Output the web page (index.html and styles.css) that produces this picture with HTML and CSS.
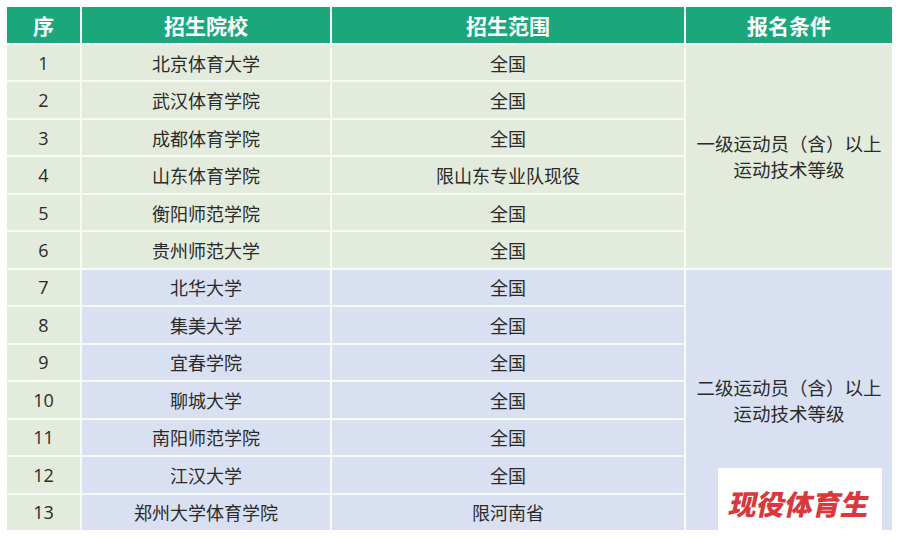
FILE: index.html
```html
<!DOCTYPE html>
<html lang="zh-CN">
<head>
<meta charset="utf-8">
<title>招生院校</title>
<link rel="stylesheet" href="styles.css">
</head>
<body>
<div class="page">
  <div class="table">
    <div class="th">序</div>
    <div class="th">招生院校</div>
    <div class="th">招生范围</div>
    <div class="th">报名条件</div>

    <div class="td seq r1">1</div><div class="td g r1 c2">北京体育大学</div><div class="td g r1 c3">全国</div>
    <div class="td seq r2">2</div><div class="td g r2 c2">武汉体育学院</div><div class="td g r2 c3">全国</div>
    <div class="td seq r3">3</div><div class="td g r3 c2">成都体育学院</div><div class="td g r3 c3">全国</div>
    <div class="td seq r4">4</div><div class="td g r4 c2">山东体育学院</div><div class="td g r4 c3">限山东专业队现役</div>
    <div class="td seq r5">5</div><div class="td g r5 c2">衡阳师范学院</div><div class="td g r5 c3">全国</div>
    <div class="td seq r6">6</div><div class="td g r6 c2">贵州师范大学</div><div class="td g r6 c3">全国</div>
    <div class="td seq r7">7</div><div class="td b r7 c2">北华大学</div><div class="td b r7 c3">全国</div>
    <div class="td seq r8">8</div><div class="td b r8 c2">集美大学</div><div class="td b r8 c3">全国</div>
    <div class="td seq r9">9</div><div class="td b r9 c2">宜春学院</div><div class="td b r9 c3">全国</div>
    <div class="td seq r10">10</div><div class="td b r10 c2">聊城大学</div><div class="td b r10 c3">全国</div>
    <div class="td seq r11">11</div><div class="td b r11 c2">南阳师范学院</div><div class="td b r11 c3">全国</div>
    <div class="td seq r12">12</div><div class="td b r12 c2">江汉大学</div><div class="td b r12 c3">全国</div>
    <div class="td seq r13">13</div><div class="td b r13 c2">郑州大学体育学院</div><div class="td b r13 c3">限河南省</div>

    <div class="td g cond cond-a">一级运动员（含）以上<br>运动技术等级</div>
    <div class="td b cond cond-b">二级运动员（含）以上<br>运动技术等级</div>
  </div>
  <div class="mark"><span class="mark-text">现役体育生</span></div>
</div>
</body>
</html>
```

FILE: styles.css
```css
html, body {
  margin: 0;
  padding: 0;
  background: #ffffff;
}
body {
  font-family: "Noto Sans CJK SC", "Noto Sans", sans-serif;
  color: #2a2a2a;
}
.page {
  position: relative;
  width: 900px;
  height: 538px;
  padding: 7px 8px 0 7px;
  box-sizing: border-box;
}
.table {
  display: grid;
  grid-template-columns: 73px 248px 352px 206px;
  grid-template-rows: 36px repeat(13, 1fr);
  column-gap: 2px;
  row-gap: 2px;
  height: 523px;
  background: #f6fbf3;
}
.th {
  background: #1ba77b;
  color: #ffffff;
  font-weight: 700;
  font-size: 21px;
  display: flex;
  align-items: center;
  justify-content: center;
  grid-row: 1;
}
.td {
  display: flex;
  align-items: center;
  justify-content: center;
  font-size: 18px;
  text-align: center;
}
.seq {
  background: #e3ecdc;
  grid-column: 1;
  font-family: "Open Sans", "Noto Sans", sans-serif;
  font-size: 18px;
}
.g { background: #e3ecdc; }
.b { background: #d9e0f1; }
.c2 { grid-column: 2; }
.c3 { grid-column: 3; }
.r1 { grid-row: 2; }
.r2 { grid-row: 3; }
.r3 { grid-row: 4; }
.r4 { grid-row: 5; }
.r5 { grid-row: 6; }
.r6 { grid-row: 7; }
.r7 { grid-row: 8; }
.r8 { grid-row: 9; }
.r9 { grid-row: 10; }
.r10 { grid-row: 11; }
.r11 { grid-row: 12; }
.r12 { grid-row: 13; }
.r13 { grid-row: 14; }
.cond {
  grid-column: 4;
  line-height: 26px;
  font-size: 18.5px;
}
.cond-a { grid-row: 2 / 8; }
.cond-b { grid-row: 8 / 15; }
.mark {
  position: absolute;
  left: 718px;
  top: 468px;
  width: 164px;
  height: 64px;
  background: #ffffff;
  display: flex;
  align-items: center;
  justify-content: center;
  padding-top: 6px;
  box-sizing: border-box;
}
.mark-text {
  display: inline-block;
  color: #d8393d;
  font-size: 28px;
  font-weight: 900;
  letter-spacing: 0;
  transform: skewX(-12deg);
}
```
